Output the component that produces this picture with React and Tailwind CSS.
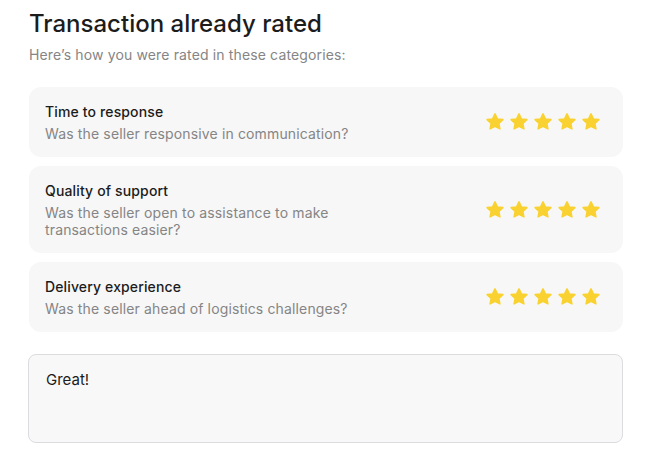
const CATEGORIES = [
  { title: 'Time to response', desc: 'Was the seller responsive in communication?', rating: 5 },
  { title: 'Quality of support', desc: 'Was the seller open to assistance to make transactions easier?', rating: 5 },
  { title: 'Delivery experience', desc: 'Was the seller ahead of logistics challenges?', rating: 5 },
];

const Star = () => (
  <svg width="20" height="20" viewBox="0 0 24 24" className="text-[#f9d231]">
    <path
      fill="currentColor"
      stroke="currentColor"
      strokeWidth="1.8"
      strokeLinejoin="round"
      d="M12 2.2l2.9 6.1 6.6.8-4.9 4.6 1.3 6.6L12 17.1l-5.9 3.2 1.3-6.6-4.9-4.6 6.6-.8z"
    />
  </svg>
);

const RatingCard = ({ title, desc, rating }) => (
  <div className="flex items-center justify-between rounded-xl bg-[#f7f7f7] pl-4 pr-[22px] py-[15px]">
    <div className="max-w-[315px]">
      <div className="text-[14px] leading-5 font-medium tracking-[0.01em] text-[#1c1c1c]">{title}</div>
      <div className="mt-[3px] text-[14px] leading-[17px] tracking-[0.01em] text-[#858585]">{desc}</div>
    </div>
    <div className="flex gap-[4px]">
      {Array.from({ length: rating }).map((_, i) => (
        <Star key={i} />
      ))}
    </div>
  </div>
);

export default function App() {
  return (
    <div
      className="w-[645px] h-[464px] bg-white px-[29px] pt-[9px] overflow-hidden"
      style={{ fontFamily: 'Inter, "Liberation Sans", sans-serif' }}
    >
      <h1 className="text-[24px] leading-[30px] font-medium text-[#1c1c1c]">Transaction already rated</h1>
      <p className="mt-[6px] text-[14px] leading-5 tracking-[0.01em] text-[#858585]">
        Here’s how you were rated in these categories:
      </p>
      <div className="mt-[22px] flex flex-col gap-[9px] mr-[-7px]">
        {CATEGORIES.map((c) => (
          <RatingCard key={c.title} {...c} />
        ))}
      </div>
      <div className="mt-[22px] mr-[-7px] -ml-px h-[89px] rounded-lg border border-[#dcdce0] bg-[#f8f8f8] px-[17px] py-[15px] text-[15px] leading-5 text-[#1c1c1c]">
        Great!
      </div>
    </div>
  );
}
